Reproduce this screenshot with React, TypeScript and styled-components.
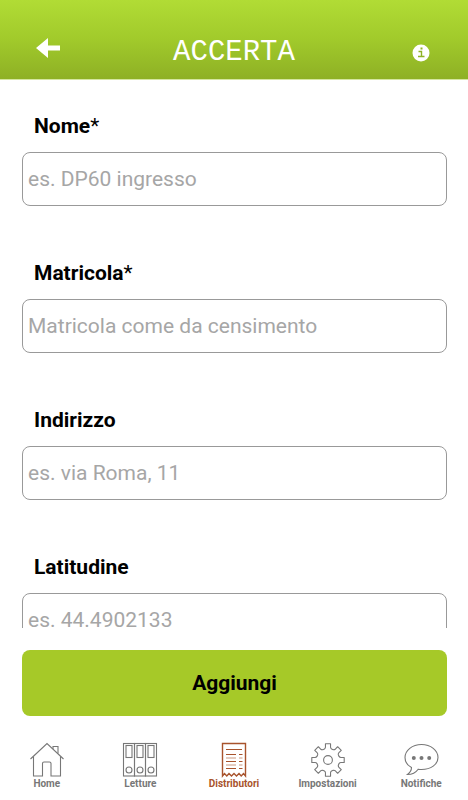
import React from "react";
import styled, { createGlobalStyle } from "styled-components";

const GlobalStyle = createGlobalStyle`
  *, *::before, *::after { box-sizing: border-box; }
  body {
    margin: 0;
    background: #fff;
    color: #000;
    font-family: Roboto, "Liberation Sans", sans-serif;
  }
`;

const Screen = styled.div`
  display: flex;
  flex-direction: column;
  height: 100vh;
  overflow: hidden;
`;

const Header = styled.header`
  flex: none;
  display: grid;
  grid-template-columns: 1fr auto 1fr;
  align-items: center;
  padding: 22px 34px 0;
  height: 80px;
  background: linear-gradient(#b1dc35, #a1ca2b 50%, #8eb025);
  border-bottom: 1px solid #d5e6a0;
`;

const Brand = styled.h1`
  margin: 0;
  padding-top: 4px;
  color: #fff;
  font: 400 29px/32px "Liberation Mono", monospace;
`;

const IconButton = styled.button<{ $side: "left" | "right" }>`
  display: flex;
  justify-self: ${(p) => (p.$side === "left" ? "start" : "end")};
  padding: ${(p) => (p.$side === "left" ? "0 0 6px" : "4px 4px 0 0")};
  border: 0;
  background: none;
  color: #fff;
  cursor: pointer;
`;

const Form = styled.form`
  flex: 1;
  min-height: 0;
  display: flex;
  flex-direction: column;
`;

const Fields = styled.div`
  flex: 1;
  min-height: 0;
  padding: 34px 21px 0 22px;
  overflow-y: auto;
  scrollbar-width: none;
`;

const Field = styled.div`
  display: flex;
  flex-direction: column;
  gap: 14px;
  margin-bottom: 55px;
`;

const Label = styled.label`
  padding-left: 12px;
  font-size: 21px;
  line-height: 24px;
  font-weight: 700;
`;

const Required = styled.span`
  font-weight: 400;
`;

const Input = styled.input`
  width: 100%;
  height: 54px;
  padding: 0 5px;
  border: 1px solid #999;
  border-radius: 8px;
  background: #fff;
  font: 400 21px/24px Roboto, "Liberation Sans", sans-serif;
  color: #000;

  &::placeholder {
    color: #a6a6a6;
    opacity: 1;
  }
`;

const Actions = styled.div`
  flex: none;
  display: flex;
  padding: 22px 21px 20px 22px;
`;

const SubmitButton = styled.button`
  flex: 1;
  height: 66px;
  border: 0;
  border-radius: 8px;
  background: #a6c928;
  color: #000;
  font: 700 21px/24px Roboto, "Liberation Sans", sans-serif;
  cursor: pointer;
`;

const TabBar = styled.nav`
  flex: none;
  display: grid;
  grid-template-columns: repeat(5, 1fr);
  padding: 6px 0 10px;
`;

const Tab = styled.a<{ $active?: boolean }>`
  display: flex;
  flex-direction: column;
  align-items: center;
  color: ${(p) => (p.$active ? "#a8532c" : "#777")};
  font-size: 10px;
  line-height: 12px;
  font-weight: 700;
  text-decoration: none;
`;

const LineIcon = styled.svg.attrs({
  width: 36,
  height: 36,
  viewBox: "0 0 36 36",
  fill: "none",
  stroke: "currentColor",
  "aria-hidden": true,
})`
  display: block;
  stroke-width: 1.1;
`;

const HomeIcon = () => (
  <LineIcon>
    <path d="M1.5 17 18 1.5 34.5 17" />
    <path d="M4.5 14.5V34H13.5V21.5Q13.5 20 15 20H20.5Q22 20 22 21.5V34H31.5V14.5" />
    <path d="M24 7V4.500H29V11.5" />
  </LineIcon>
);

const BindersIcon = () => (
  <LineIcon>
    {[1.5, 12.5, 23.5].map((x) => (
      <g key={x}>
        <rect x={x} y="1.5" width="11" height="32.5" />
        <rect x={x + 2.5} y="3.5" width="6" height="12" />
        <circle cx={x + 5.5} cy="28" r="3" />
      </g>
    ))}
  </LineIcon>
);

const ReceiptIcon = () => (
  <LineIcon>
    <path
      strokeWidth="1.4"
      d="M6.5 34V1.5H29.5V34L27.5 31.5 25.2 34 23 31.5 20.5 34 18 31.5 15.5 34 13 31.5 10.8 34 8.5 31.5Z"
    />
    <path d="M10 7.500H26M10 12.5H20M23 12.5H26.5M10 19.5H20M23 19.5H26.5M10 26.5H20M23 26.5H26.5" />
    <path opacity="0.6" d="M10 16H20M23 16H26.5M10 23H20M23 23H26.5" />
  </LineIcon>
);

const gearPoint = (radius: number, degrees: number) => {
  const angle = (degrees * Math.PI) / 180;
  return `${(18 + radius * Math.sin(angle)).toFixed(2)} ${(18 - radius * Math.cos(angle)).toFixed(2)}`;
};

const gearOutline =
  Array.from({ length: 8 }, (_, i) => {
    const a = i * 45;
    return [
      `${i === 0 ? "M" : "L"}${gearPoint(13.2, a - 11)}`,
      `L${gearPoint(16.4, a - 9)}`,
      `L${gearPoint(16.4, a + 9)}`,
      `L${gearPoint(13.2, a + 11)}`,
      `Q${gearPoint(12, a + 12)} ${gearPoint(11.6, a + 18)}`,
      `L${gearPoint(11.6, a + 27)}`,
      `Q${gearPoint(12, a + 33)} ${gearPoint(13.2, a + 34)}`,
    ].join("");
  }).join("") + "Z";

const GearIcon = () => (
  <LineIcon>
    <path d={gearOutline} strokeLinejoin="round" />
    <circle cx="18" cy="18" r="4.4" />
  </LineIcon>
);

const ChatIcon = () => (
  <LineIcon>
    <path d="M8.5 25.5C4.5 23.5 2 19.5 2 15.5C2 8.5 9.2 2.5 18.5 2.5S35 8.5 35 15.5S27.8 27.5 18.5 27.5Q16.8 27.5 15.2 27.2C12.5 31 8.5 32.5 4.5 32.5Q8.5 29.5 8.5 25.5Z" />
    <g fill="currentColor" stroke="none">
      <circle cx="10.8" cy="16" r="2" />
      <circle cx="18.5" cy="16" r="2" />
      <circle cx="26.2" cy="16" r="2" />
    </g>
  </LineIcon>
);

const fields = [
  { id: "nome", label: "Nome", required: true, placeholder: "es. DP60 ingresso" },
  { id: "matricola", label: "Matricola", required: true, placeholder: "Matricola come da censimento" },
  { id: "indirizzo", label: "Indirizzo", required: false, placeholder: "es. via Roma, 11" },
  { id: "latitudine", label: "Latitudine", required: false, placeholder: "es. 44.4902133" },
];

const tabs = [
  { label: "Home", Icon: HomeIcon },
  { label: "Letture", Icon: BindersIcon },
  { label: "Distributori", Icon: ReceiptIcon, active: true },
  { label: "Impostazioni", Icon: GearIcon },
  { label: "Notifiche", Icon: ChatIcon },
];

export default function App() {
  return (
    <>
      <GlobalStyle />
      <Screen>
        <Header>
          <IconButton $side="left" type="button" aria-label="Indietro">
            <svg width="28" height="22" viewBox="0 0 28 22" fill="currentColor" aria-hidden="true">
              <path d="M2 11 14 1V8.5H26V13.5H14V21Z" />
            </svg>
          </IconButton>
          <Brand>ACCERTA</Brand>
          <IconButton $side="right" type="button" aria-label="Informazioni">
            <svg width="18" height="18" viewBox="0 0 18 18" aria-hidden="true">
              <circle cx="9" cy="9" r="8.5" fill="currentColor" />
              <path d="M6.5 7.5H9.5V12.5M6 12.5H12.5" fill="none" stroke="#8fb325" strokeWidth="1.4" />
              <rect x="8.5" y="3.5" width="2" height="2" fill="#8fb325" />
            </svg>
          </IconButton>
        </Header>
        <Form onSubmit={(e) => e.preventDefault()}>
          <Fields>
            {fields.map((f) => (
              <Field key={f.id}>
                <Label htmlFor={f.id}>
                  {f.label}
                  {f.required && <Required>*</Required>}
                </Label>
                <Input id={f.id} name={f.id} type="text" placeholder={f.placeholder} />
              </Field>
            ))}
          </Fields>
          <Actions>
            <SubmitButton type="submit">Aggiungi</SubmitButton>
          </Actions>
        </Form>
        <TabBar aria-label="Principale">
          {tabs.map(({ label, Icon, active }) => (
            <Tab key={label} href={`#${label.toLowerCase()}`} $active={active} aria-current={active ? "page" : undefined}>
              <Icon />
              {label}
            </Tab>
          ))}
        </TabBar>
      </Screen>
    </>
  );
}
